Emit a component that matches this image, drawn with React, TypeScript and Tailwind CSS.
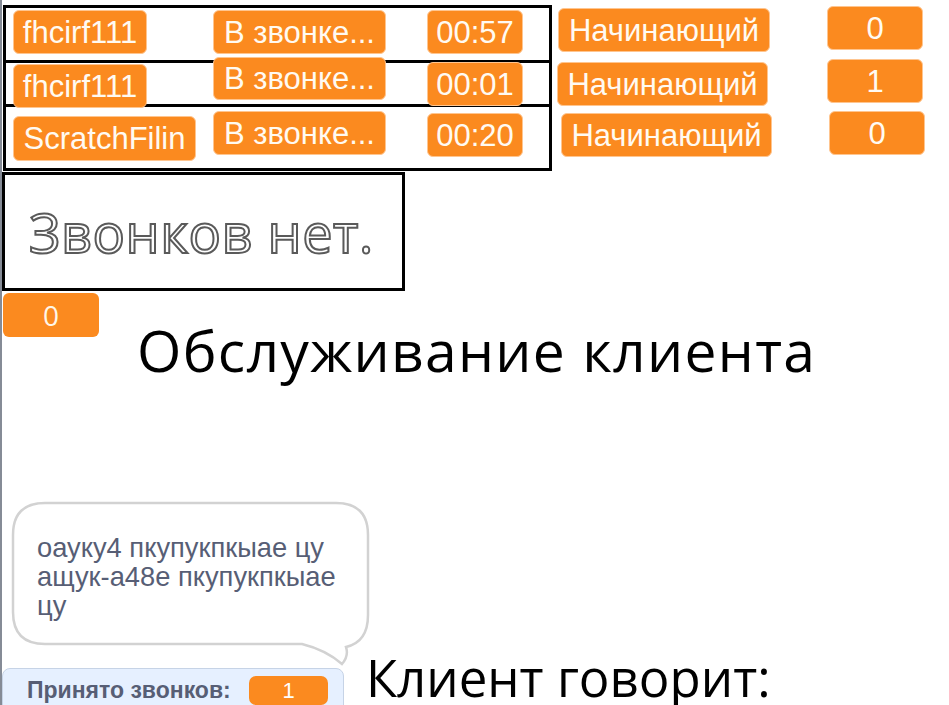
import React from "react";

type PillProps = { x: number; y: number; w: number; h: number; text: string; size?: number };

const sans = '"Liberation Sans", Arial, sans-serif';
const open = '"Open Sans", "Noto Sans", sans-serif';

function Pill({ x, y, w, h, text, size = 31 }: PillProps) {
  return (
    <div
      className="absolute flex items-center justify-center rounded-[6px] border border-[#ffc58f] bg-[#fb8a1f] text-[#fffaf2] leading-none whitespace-nowrap"
      style={{ left: x, top: y, width: w, height: h, fontSize: size, fontFamily: sans }}
    >
      {text}
    </div>
  );
}

export default function App() {
  const pills: PillProps[] = [
    { x: 13, y: 10, w: 134, h: 44, text: "fhcirf111" },
    { x: 213, y: 10, w: 173, h: 44, text: "В звонке..." },
    { x: 427, y: 10, w: 96, h: 44, text: "00:57" },
    { x: 558, y: 8, w: 212, h: 44, text: "Начинающий" },
    { x: 827, y: 6, w: 96, h: 44, text: "0" },

    { x: 13, y: 64, w: 134, h: 44, text: "fhcirf111" },
    { x: 213, y: 57, w: 173, h: 43, text: "В звонке..." },
    { x: 427, y: 62, w: 96, h: 44, text: "00:01" },
    { x: 557, y: 62, w: 211, h: 44, text: "Начинающий" },
    { x: 827, y: 59, w: 96, h: 44, text: "1" },

    { x: 13, y: 116, w: 183, h: 45, text: "ScratchFilin" },
    { x: 213, y: 111, w: 173, h: 44, text: "В звонке..." },
    { x: 427, y: 113, w: 96, h: 44, text: "00:20" },
    { x: 561, y: 113, w: 211, h: 44, text: "Начинающий" },
    { x: 829, y: 111, w: 96, h: 44, text: "0" },
  ];

  return (
    <div className="relative w-[949px] h-[705px] overflow-hidden bg-white">
      {/* stage left edge */}
      <div className="absolute left-0 top-0 w-[2px] h-[705px] bg-[#858b96]" />

      {/* table frame */}
      <div className="absolute left-[3px] top-[5px] w-[549px] h-[166px] border-[3px] border-black" />
      <div className="absolute left-[3px] top-[60px] w-[549px] h-[3px] bg-black" />
      <div className="absolute left-[3px] top-[104px] w-[549px] h-[3px] bg-black" />

      {pills.map((p, i) => (
        <Pill key={i} {...p} />
      ))}

      {/* no calls box */}
      <div className="absolute left-[2px] top-[172px] w-[403px] h-[119px] border-[3px] border-black flex items-center pl-[24px]">
        <span
          className="text-transparent text-[54px] leading-none tracking-[0.5px] [-webkit-text-stroke:2px_#5a5a5a]"
          style={{ fontFamily: open }}
        >
          Звонков нет.
        </span>
      </div>

      <div
        className="absolute left-[3px] top-[293px] w-[96px] h-[44px] rounded-[6px] bg-[#fb8a1f] text-[#fff6e8] text-[28px] flex items-center justify-center leading-none"
        style={{ fontFamily: open }}
      >
        0
      </div>

      <div
        className="absolute left-[137px] top-[322px] text-[57px] tracking-[1.3px] leading-none text-black whitespace-nowrap"
        style={{ fontFamily: open }}
      >
        Обслуживание клиента
      </div>

      {/* speech bubble */}
      <svg className="absolute left-0 top-[490px]" width="400" height="190" viewBox="0 0 400 190">
        <path
          d="M45 13 L336 13 Q368 13 368 45 L368 125 Q368 152 346 157 Q349 166 342 174 Q326 160 302 154 L45 154 Q13 154 13 122 L13 45 Q13 13 45 13 Z"
          fill="white"
          stroke="#d2d2d2"
          strokeWidth="2.5"
        />
      </svg>
      <div
        className="absolute left-[37px] top-[533px] text-[27.3px] leading-[29px] text-[#575e75] whitespace-nowrap"
        style={{ fontFamily: sans }}
      >
        оауку4 пкупукпкыае цу
        <br />
        ащук-а48е пкупукпкыае
        <br />
        цу
      </div>

      {/* monitor */}
      <div className="absolute left-[2px] top-[668px] w-[342px] h-[50px] rounded-t-[8px] border border-[#c6d3e6] bg-[#e6f0ff] flex items-start">
        <span
          className="ml-[24px] mt-[10px] text-[23px] font-bold text-[#575e75] leading-none"
          style={{ fontFamily: sans }}
        >
          Принято звонков:
        </span>
      </div>
      <div
        className="absolute left-[249px] top-[676px] w-[79px] h-[29px] rounded-[7px] bg-[#fb8a1f] text-white text-[22px] flex items-center justify-center leading-none"
        style={{ fontFamily: sans }}
      >
        1
      </div>

      <div
        className="absolute left-[366px] top-[652px] text-[51px] leading-none text-black whitespace-nowrap"
        style={{ fontFamily: open }}
      >
        Клиент говорит:
      </div>
    </div>
  );
}
